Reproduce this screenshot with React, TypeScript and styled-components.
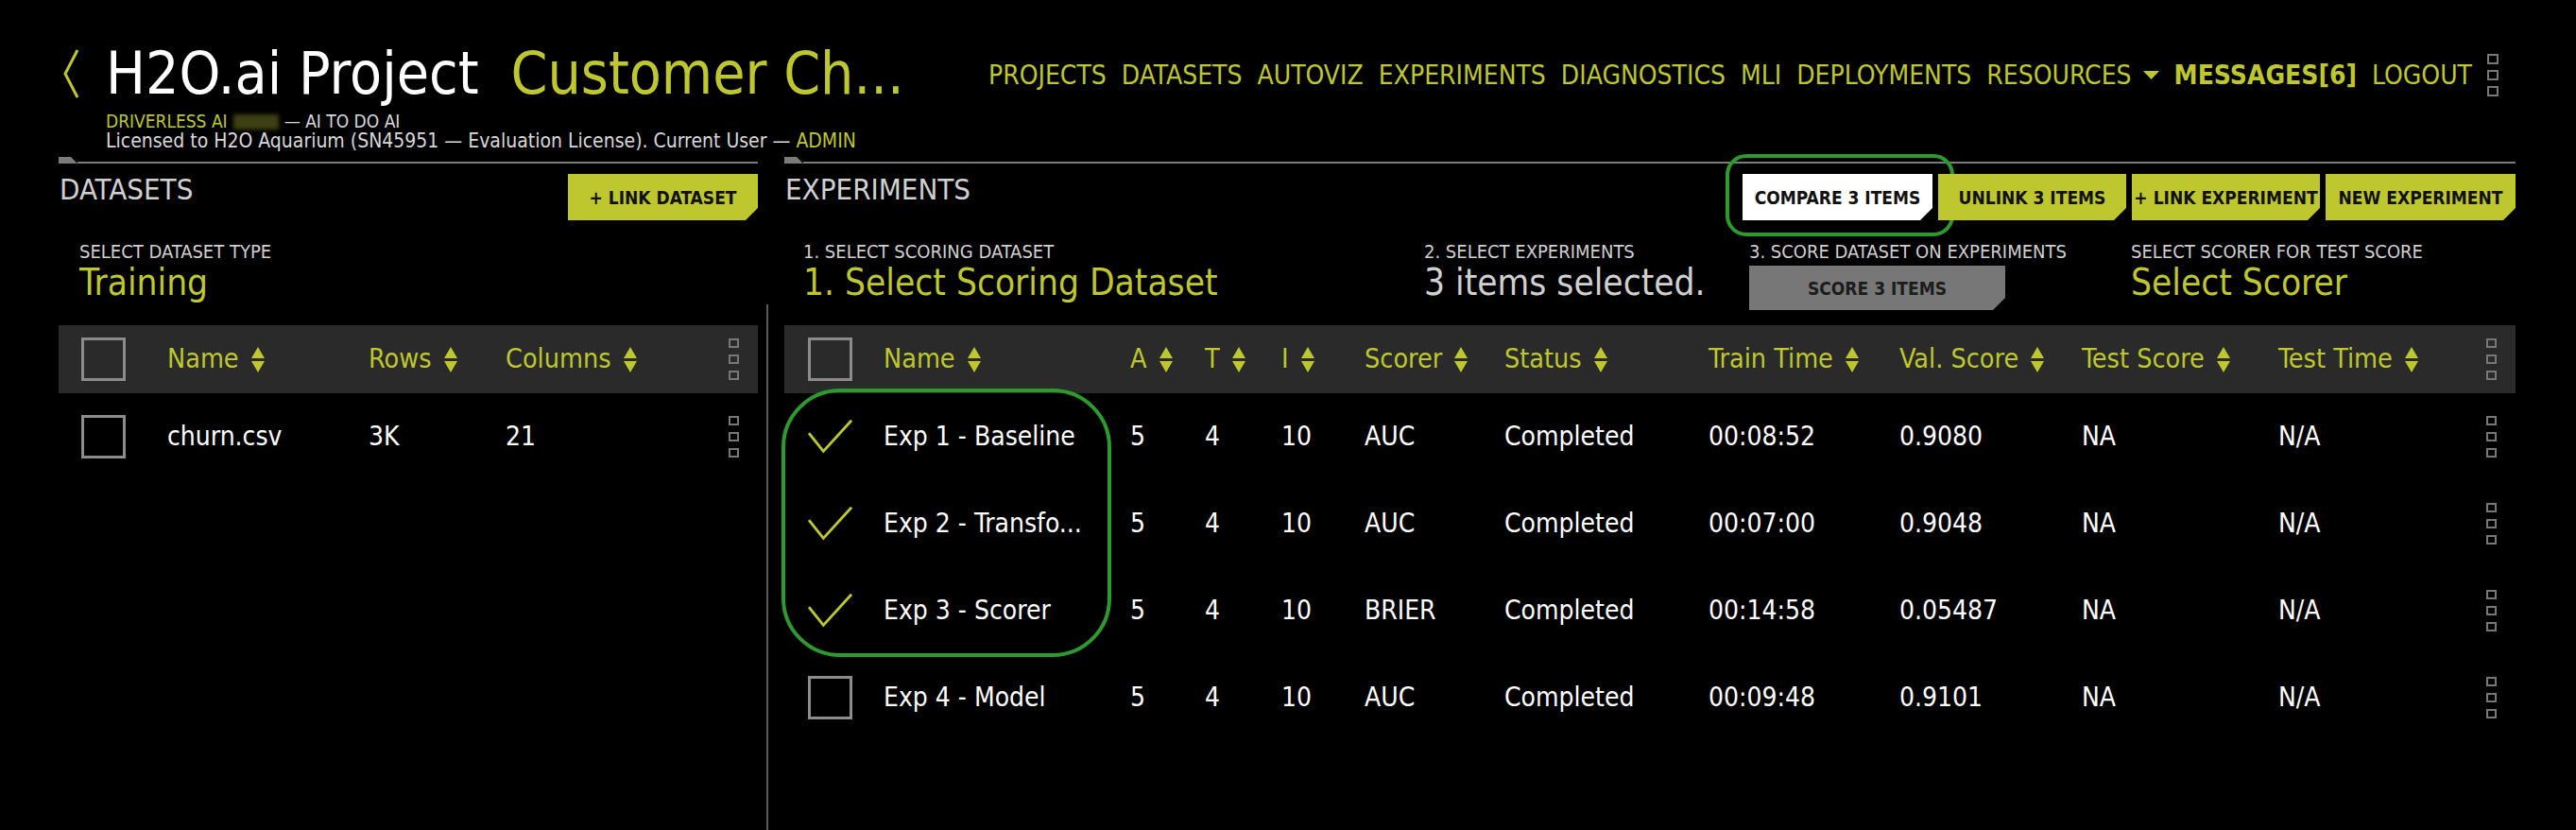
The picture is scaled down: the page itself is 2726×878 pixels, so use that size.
import React from "react";
import styled, { createGlobalStyle } from "styled-components";

const Y = "#bec72d";
const FONT = `"Liberation Sans Narrow", "DejaVu Sans Condensed", "Roboto Condensed", "Liberation Sans", sans-serif`;

const Global = createGlobalStyle`
  html, body { margin: 0; padding: 0; background: #000; }
  body { font-family: ${FONT}; font-stretch: condensed; color: #fff; }
  * { box-sizing: border-box; }
`;

const Page = styled.div`
  min-height: 100vh;
  padding: 0 64px 0 62px;
  display: flex;
  flex-direction: column;
  background: #000;
`;

const Header = styled.header`
  display: flex;
  justify-content: space-between;
  align-items: flex-start;
`;

const Brand = styled.div`
  display: flex;
  align-items: flex-start;
  gap: 28px;
  padding: 46px 0 0 4px;
`;

const Chevron = styled.svg`
  margin-top: 6px;
  flex: none;
`;

const BrandText = styled.div`
  display: flex;
  flex-direction: column;
`;

const TitleRow = styled.div`
  display: flex;
  gap: 34px;
  font-size: 62px;
  line-height: 64px;
  white-space: nowrap;
`;

const Title = styled.span`
  color: #fff;
`;

const ProjectName = styled.span`
  color: ${Y};
`;

const Tagline = styled.div`
  margin-top: 9px;
  font-size: 19px;
  line-height: 19px;
  color: #d8d8d8;
  display: flex;
  align-items: center;
  gap: 6px;
  white-space: nowrap;
`;

const Accent = styled.span`
  color: ${Y};
`;

const Redacted = styled.span`
  display: inline-block;
  width: 48px;
  height: 16px;
  background: #3d4014;
  filter: blur(2px);
`;

const License = styled.div`
  font-size: 21px;
  line-height: 22px;
  color: #d8d8d8;
  white-space: nowrap;
`;

const Nav = styled.nav`
  display: flex;
  align-items: center;
  gap: 16px;
  margin: 57px 18px 0 0;
`;

const NavLink = styled.a<{ $bold?: boolean }>`
  color: ${Y};
  font-size: 28px;
  line-height: 28px;
  font-weight: ${(p) => (p.$bold ? 700 : 400)};
  text-decoration: none;
  display: flex;
  align-items: center;
  gap: 12px;
  white-space: nowrap;
`;

const KebabWrap = styled.div<{ $gap: number }>`
  display: flex;
  flex-direction: column;
  gap: ${(p) => p.$gap}px;
  flex: none;
`;

const KebabDot = styled.span<{ $size: number }>`
  display: block;
  width: ${(p) => p.$size}px;
  height: ${(p) => p.$size - 1}px;
  border: 2px solid #777;
`;

const Main = styled.div`
  display: flex;
  flex: 1;
  margin-top: 6px;
`;

const Panel = styled.section<{ $width?: number }>`
  ${(p) => (p.$width ? `width: ${p.$width}px; flex: none;` : `flex: 1; min-width: 0;`)}
  display: flex;
  flex-direction: column;
`;

const Rule = styled.div`
  display: flex;
  align-items: flex-end;
  height: 7px;
`;

const RuleTab = styled.span`
  width: 20px;
  height: 7px;
  background: #7b7b7b;
  clip-path: polygon(0 0, 65% 0, 100% 100%, 0 100%);
`;

const RuleLine = styled.span`
  flex: 1;
  height: 2px;
  background: #7b7b7b;
`;

const PanelHead = styled.div`
  display: flex;
  justify-content: space-between;
  align-items: flex-start;
  margin-top: 11px;
  height: 49px;
`;

const SectionTitle = styled.h2`
  margin: 0;
  font-weight: 400;
  font-size: 31px;
  line-height: 33px;
  color: #d0d0d0;
  padding-left: 1px;
`;

const ButtonGroup = styled.div`
  display: flex;
  gap: 6px;
`;

const variantColors = {
  yellow: { bg: Y, fg: "#111" },
  white: { bg: "#fff", fg: "#111" },
  gray: { bg: "#777", fg: "#1c1c1c" },
};

const CutButton = styled.button<{ $variant?: "yellow" | "white" | "gray"; $width?: number; $height?: number }>`
  width: ${(p) => p.$width ?? 200}px;
  height: ${(p) => p.$height ?? 49}px;
  border: none;
  padding: 0;
  margin: 0;
  font-family: inherit;
  font-stretch: condensed;
  font-size: 19px;
  line-height: 22px;
  font-weight: 700;
  white-space: nowrap;
  background: ${(p) => variantColors[p.$variant ?? "yellow"].bg};
  color: ${(p) => variantColors[p.$variant ?? "yellow"].fg};
  clip-path: polygon(0 0, 100% 0, 100% calc(100% - 13px), calc(100% - 13px) 100%, 0 100%);
  display: flex;
  align-items: center;
  justify-content: center;
`;

const Highlight = styled.div`
  position: relative;
`;

const HighlightRing = styled.span`
  position: absolute;
  left: -18px;
  top: -21px;
  right: -23px;
  bottom: -17px;
  border: 4px solid #2c9a2c;
  border-radius: 22px;
  pointer-events: none;
`;

const Controls = styled.div<{ $cols: string; $pl: number }>`
  display: grid;
  grid-template-columns: ${(p) => p.$cols};
  height: 111px;
  padding: 23px 0 0 ${(p) => p.$pl}px;
`;

const Field = styled.div`
  display: flex;
  flex-direction: column;
  align-items: flex-start;
`;

const FieldLabel = styled.div`
  font-size: 20px;
  line-height: 20px;
  color: #d0d0d0;
  white-space: nowrap;
`;

const FieldValue = styled.div<{ $muted?: boolean }>`
  margin-top: 3px;
  font-size: 38.5px;
  line-height: 40px;
  color: ${(p) => (p.$muted ? "#d0d0d0" : Y)};
  white-space: nowrap;
`;

const FieldAction = styled.div`
  margin-top: 5px;
`;

const Table = styled.div`
  position: relative;
`;

const Row = styled.div<{ $cols: string; $pl: number; $head?: boolean }>`
  display: grid;
  grid-template-columns: ${(p) => p.$cols};
  align-items: center;
  height: ${(p) => (p.$head ? 72 : 92)}px;
  background: ${(p) => (p.$head ? "#2a2a2a" : "transparent")};
  padding: 0 19px 0 ${(p) => p.$pl}px;
`;

const HeadCell = styled.div`
  display: flex;
  align-items: center;
  gap: 13px;
  color: ${Y};
  font-size: 28.5px;
  line-height: 34px;
  white-space: nowrap;
`;

const Cell = styled.div`
  color: #fff;
  font-size: 28px;
  line-height: 34px;
  white-space: nowrap;
`;

const Checkbox = styled.span`
  display: block;
  width: 47px;
  height: 46px;
  border: 3px solid #8c8c8c;
`;

const CheckSlot = styled.span`
  display: flex;
  width: 48px;
  height: 46px;
  align-items: center;
`;

const SelectionRing = styled.span`
  position: absolute;
  left: -3px;
  top: 67px;
  width: 349px;
  height: 284px;
  border: 4px solid #2c9a2c;
  border-radius: 62px;
  pointer-events: none;
`;

const Divider = styled.div`
  flex: none;
  width: 2px;
  margin: 156px 17px 0 9px;
  background: #5a5a5a;
`;

const Kebab = ({ size = 11, gap = 7 }: { size?: number; gap?: number }) => (
  <KebabWrap $gap={gap}>
    <KebabDot $size={size} />
    <KebabDot $size={size} />
    <KebabDot $size={size} />
  </KebabWrap>
);

const SortIcon = () => (
  <svg width="14" height="27" viewBox="0 0 14 27" aria-hidden>
    <path d="M7 0 L14 12 L0 12 Z M0 15 L14 15 L7 27 Z" fill={Y} />
  </svg>
);

const CheckMark = () => (
  <svg width="50" height="38" viewBox="0 0 50 38" aria-hidden>
    <polyline points="1,15 17,35 48,1" fill="none" stroke={Y} strokeWidth="3" />
  </svg>
);

const Sortable = ({ label }: { label: string }) => (
  <HeadCell>
    {label}
    <SortIcon />
  </HeadCell>
);

const DS_COLS = "91px 213px 145px 1fr 12px";
const EX_COLS = "80px 261px 79px 81px 88px 148px 216px 202px 193px 208px 1fr 12px";

const experiments = [
  { name: "Exp 1 - Baseline", a: "5", t: "4", i: "10", scorer: "AUC", status: "Completed", train: "00:08:52", val: "0.9080", test: "NA", testTime: "N/A", checked: true },
  { name: "Exp 2 - Transfo...", a: "5", t: "4", i: "10", scorer: "AUC", status: "Completed", train: "00:07:00", val: "0.9048", test: "NA", testTime: "N/A", checked: true },
  { name: "Exp 3 - Scorer", a: "5", t: "4", i: "10", scorer: "BRIER", status: "Completed", train: "00:14:58", val: "0.05487", test: "NA", testTime: "N/A", checked: true },
  { name: "Exp 4 - Model", a: "5", t: "4", i: "10", scorer: "AUC", status: "Completed", train: "00:09:48", val: "0.9101", test: "NA", testTime: "N/A", checked: false },
];

const navItems = ["PROJECTS", "DATASETS", "AUTOVIZ", "EXPERIMENTS", "DIAGNOSTICS", "MLI", "DEPLOYMENTS"];

export default function App() {
  return (
    <>
      <Global />
      <Page>
        <Header>
          <Brand>
            <Chevron width="18" height="52" viewBox="0 0 18 52">
              <polyline points="16,1 3,26 16,51" fill="none" stroke={Y} strokeWidth="3" />
            </Chevron>
            <BrandText>
              <TitleRow>
                <Title>H2O.ai Project</Title>
                <ProjectName>Customer Ch...</ProjectName>
              </TitleRow>
              <Tagline>
                <Accent>DRIVERLESS AI</Accent>
                <Redacted />
                <span>— AI TO DO AI</span>
              </Tagline>
              <License>
                Licensed to H2O Aquarium (SN45951 — Evaluation License). Current User — <Accent>ADMIN</Accent>
              </License>
            </BrandText>
          </Brand>
          <Nav>
            {navItems.map((n) => (
              <NavLink key={n}>{n}</NavLink>
            ))}
            <NavLink>
              RESOURCES
              <svg width="17" height="9" viewBox="0 0 17 9" aria-hidden>
                <path d="M0 0 L17 0 L8.5 9 Z" fill={Y} />
              </svg>
            </NavLink>
            <NavLink $bold>MESSAGES[6]</NavLink>
            <NavLink>LOGOUT</NavLink>
            <Kebab size={12} gap={6} />
          </Nav>
        </Header>

        <Main>
          <Panel $width={740}>
            <Rule>
              <RuleTab />
              <RuleLine />
            </Rule>
            <PanelHead>
              <SectionTitle>DATASETS</SectionTitle>
              <CutButton $width={201}>+ LINK DATASET</CutButton>
            </PanelHead>
            <Controls $cols="1fr" $pl={22}>
              <Field>
                <FieldLabel>SELECT DATASET TYPE</FieldLabel>
                <FieldValue>Training</FieldValue>
              </Field>
            </Controls>
            <Table>
              <Row $cols={DS_COLS} $pl={24} $head>
                <Checkbox />
                <Sortable label="Name" />
                <Sortable label="Rows" />
                <Sortable label="Columns" />
                <Kebab />
              </Row>
              <Row $cols={DS_COLS} $pl={24}>
                <Checkbox />
                <Cell>churn.csv</Cell>
                <Cell>3K</Cell>
                <Cell>21</Cell>
                <Kebab />
              </Row>
            </Table>
          </Panel>

          <Divider />

          <Panel>
            <Rule>
              <RuleTab />
              <RuleLine />
            </Rule>
            <PanelHead>
              <SectionTitle>EXPERIMENTS</SectionTitle>
              <ButtonGroup>
                <Highlight>
                  <CutButton $variant="white" $width={201}>COMPARE 3 ITEMS</CutButton>
                  <HighlightRing />
                </Highlight>
                <CutButton $width={199}>UNLINK 3 ITEMS</CutButton>
                <CutButton $width={199}>+ LINK EXPERIMENT</CutButton>
                <CutButton $width={201}>NEW EXPERIMENT</CutButton>
              </ButtonGroup>
            </PanelHead>
            <Controls $cols="657px 344px 404px 1fr" $pl={20}>
              <Field>
                <FieldLabel>1. SELECT SCORING DATASET</FieldLabel>
                <FieldValue>1. Select Scoring Dataset</FieldValue>
              </Field>
              <Field>
                <FieldLabel>2. SELECT EXPERIMENTS</FieldLabel>
                <FieldValue $muted>3 items selected.</FieldValue>
              </Field>
              <Field>
                <FieldLabel>3. SCORE DATASET ON EXPERIMENTS</FieldLabel>
                <FieldAction>
                  <CutButton $variant="gray" $width={271} $height={47}>SCORE 3 ITEMS</CutButton>
                </FieldAction>
              </Field>
              <Field>
                <FieldLabel>SELECT SCORER FOR TEST SCORE</FieldLabel>
                <FieldValue>Select Scorer</FieldValue>
              </Field>
            </Controls>
            <Table>
              <Row $cols={EX_COLS} $pl={25} $head>
                <Checkbox />
                <Sortable label="Name" />
                <Sortable label="A" />
                <Sortable label="T" />
                <Sortable label="I" />
                <Sortable label="Scorer" />
                <Sortable label="Status" />
                <Sortable label="Train Time" />
                <Sortable label="Val. Score" />
                <Sortable label="Test Score" />
                <Sortable label="Test Time" />
                <Kebab />
              </Row>
              {experiments.map((e) => (
                <Row key={e.name} $cols={EX_COLS} $pl={25}>
                  {e.checked ? (
                    <CheckSlot>
                      <CheckMark />
                    </CheckSlot>
                  ) : (
                    <Checkbox />
                  )}
                  <Cell>{e.name}</Cell>
                  <Cell>{e.a}</Cell>
                  <Cell>{e.t}</Cell>
                  <Cell>{e.i}</Cell>
                  <Cell>{e.scorer}</Cell>
                  <Cell>{e.status}</Cell>
                  <Cell>{e.train}</Cell>
                  <Cell>{e.val}</Cell>
                  <Cell>{e.test}</Cell>
                  <Cell>{e.testTime}</Cell>
                  <Kebab />
                </Row>
              ))}
              <SelectionRing />
            </Table>
          </Panel>
        </Main>
      </Page>
    </>
  );
}
